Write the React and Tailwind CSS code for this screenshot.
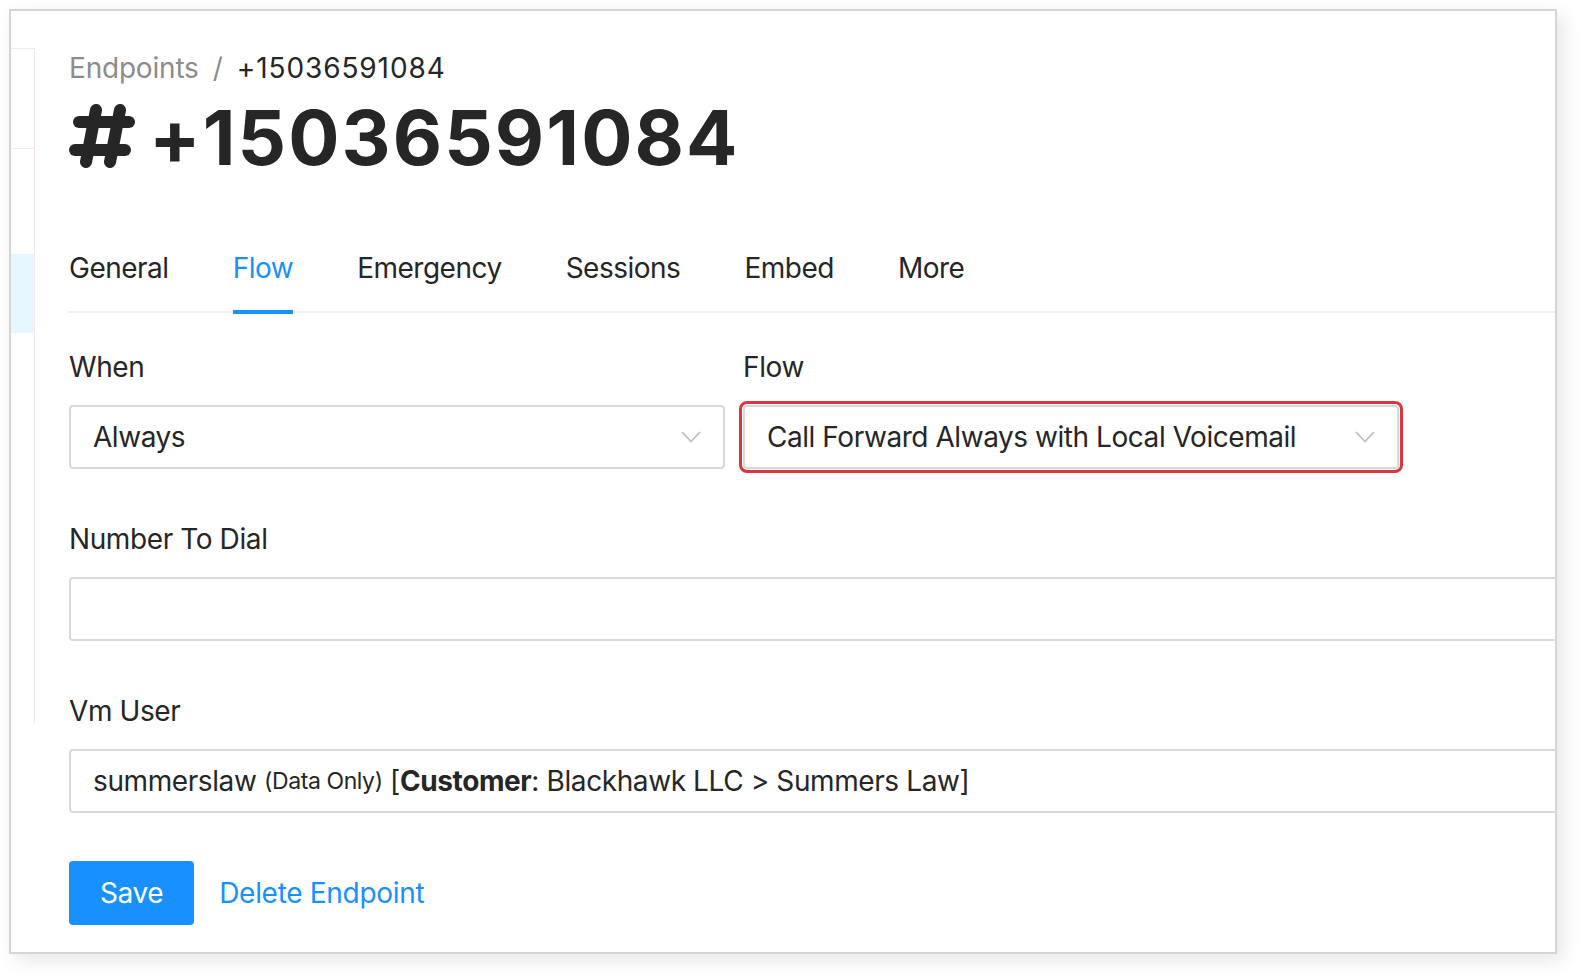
const FONT = { fontFamily: 'Inter, "Liberation Sans", Arial, sans-serif' };

function Hash() {
  return (
    <svg width="66" height="66" viewBox="0 0 66 66" className="shrink-0 mt-[12px]">
      <g stroke="#262626" strokeWidth="12" strokeLinecap="round" fill="none">
        <line x1="27" y1="7" x2="17" y2="59" />
        <line x1="51" y1="7" x2="41" y2="59" />
        <line x1="10" y1="19" x2="60" y2="19" />
        <line x1="6" y1="47" x2="56" y2="47" />
      </g>
    </svg>
  );
}

function Chevron() {
  return (
    <svg width="20" height="12" viewBox="0 0 20 12" className="shrink-0">
      <polyline points="1,1 10,10.5 19,1" fill="none" stroke="#bfbfbf" strokeWidth="1.8" />
    </svg>
  );
}

function Select({ value, className = "" }) {
  return (
    <div
      className={
        "flex h-[64px] items-center justify-between rounded-[4px] border-2 border-[#d9d9d9] bg-white pl-[22px] pr-[22px] text-[28px] tracking-[-0.45px] text-[#262626] " +
        className
      }
    >
      <span>{value}</span>
      <Chevron />
    </div>
  );
}

function Label({ children }) {
  return <div className="pb-[16px] text-[28px] leading-[44px] tracking-[-0.4px] text-[#262626]">{children}</div>;
}

export default function App() {
  const tabs = ["General", "Flow", "Emergency", "Sessions", "Embed", "More"];
  return (
    <div className="min-h-screen bg-white pl-[9px] pt-[9px]" style={FONT}>
      <div className="flex h-[945px] w-[1548px] overflow-hidden border-2 border-[#d5d5d5] bg-white shadow-[6px_6px_18px_rgba(0,0,0,0.10)]">
        <aside className="mt-[37px] flex h-[676px] w-[24px] shrink-0 flex-col self-start border-r border-[#f3e9e9]">
          <div className="h-[101px] border-y border-[#f3e9e9]" />
          <div className="h-[105px]" />
          <div className="h-[79px] bg-[#e6f7ff]" />
        </aside>
        <main className="min-w-0 flex-1 pl-[34px] pt-[35px]">
          <div className="flex items-center text-[28px] leading-[44px]">
            <span className="tracking-[-0.2px] text-[#8c8c8c]">Endpoints</span>
            <span className="mx-[14px] text-[#8c8c8c]">/</span>
            <span className="tracking-[0.9px] text-[#262626]">+15036591084</span>
          </div>
          <div className="mt-[1px] flex items-start gap-[14px]">
            <Hash />
            <h1 className="text-[76px] font-bold leading-[92px] tracking-[2.1px] text-[#262626]">+15036591084</h1>
          </div>

          <nav className="mt-[38px] flex gap-[64px] border-b-2 border-[#f0f0f0]">
            {tabs.map((t) => (
              <div
                key={t}
                className={
                  t === "Flow"
                    ? "-mb-[3px] border-b-4 border-[#1890ff] pb-[20px] pt-[25px] text-[28px] leading-[44px] tracking-[-0.5px] text-[#1890ff]"
                    : "-mb-[3px] border-b-4 border-transparent pb-[20px] pt-[25px] text-[28px] leading-[44px] tracking-[-0.5px] text-[#262626]"
                }
              >
                {t}
              </div>
            ))}
          </nav>

          <div className="mt-[32px] grid grid-cols-[656px_656px] gap-x-[18px]">
            <div>
              <Label>When</Label>
              <Select value="Always" />
            </div>
            <div>
              <Label>Flow</Label>
              <Select
                value="Call Forward Always with Local Voicemail"
                className="outline-[3px] outline-offset-[1px] outline-solid outline-[#d9363e]"
              />
            </div>
          </div>

          <div className="mt-[48px]">
            <Label>Number To Dial</Label>
            <div className="h-[64px] w-[calc(100%+20px)] rounded-[4px] border-2 border-[#d9d9d9] bg-white" />
          </div>

          <div className="mt-[48px]">
            <Label>Vm User</Label>
            <div className="flex h-[64px] w-[calc(100%+20px)] items-center whitespace-pre rounded-[4px] border-2 border-[#d9d9d9] bg-white px-[22px] text-[28px] tracking-[-0.4px] text-[#262626]">
              <span>summerslaw </span>
              <span className="text-[23px]">(Data Only)</span>
              <span> [</span>
              <span className="font-bold">Customer</span>
              <span>: Blackhawk LLC &gt; Summers Law]</span>
            </div>
          </div>

          <div className="mt-[48px] flex items-center">
            <button className="h-[64px] rounded-[4px] bg-[#1890ff] px-[31px] text-[28px] tracking-[-0.4px] text-white">Save</button>
            <span className="ml-[25px] text-[28px] tracking-[-0.3px] text-[#1890ff]">Delete Endpoint</span>
          </div>
        </main>
      </div>
    </div>
  );
}
